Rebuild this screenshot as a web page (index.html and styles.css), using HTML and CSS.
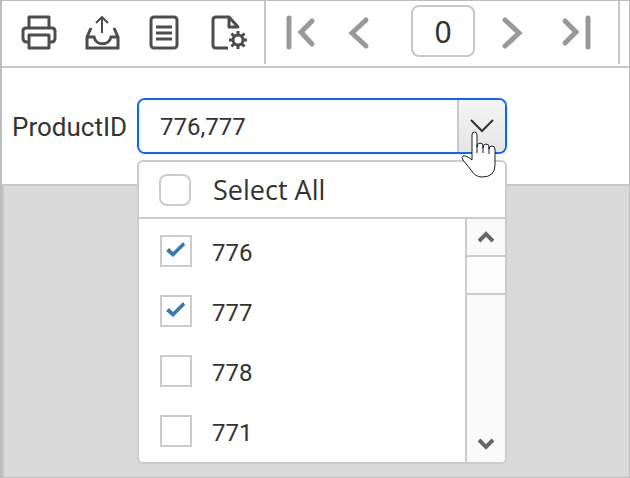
FILE: index.html
```html
<!DOCTYPE html>
<html lang="en">
  <head>
    <meta charset="utf-8" />
    <meta name="viewport" content="width=device-width, initial-scale=1" />
    <title>Report Viewer</title>
    <link rel="stylesheet" href="styles.css">
  </head>
  <body>
    <div class="viewer">
      <div class="toolbar">
        <div class="tools">
          <button type="button" class="tool" aria-label="Print">
            <svg width="36" height="36" viewBox="0 0 36 36">
              <path d="M8 12V2h20v10M8 27H6q-4 0-4-4v-7q0-3 3-3h26q3 0 3 3v7q0 4-4 4h-2M8 20h20v13H8z" />
            </svg>
          </button>
          <button type="button" class="tool" aria-label="Export">
            <svg width="36" height="36" viewBox="0 0 36 36">
              <path class="tray" d="M7 13l-4 9v11h31V22l-4-9M3 22h7c2 9 15 9 17 0h7" />
              <path class="thin" d="M18 18V2M12 8l6-6 6 6" />
            </svg>
          </button>
          <button type="button" class="tool" aria-label="Document map">
            <svg width="36" height="36" viewBox="0 0 36 36">
              <rect x="4" y="2" width="26" height="31" rx="3" />
              <path d="M9 12h16M9 18h16M9 24h16" />
            </svg>
          </button>
          <button type="button" class="tool tool-wide" aria-label="Page setup">
            <svg width="40" height="36" viewBox="0 0 40 36">
              <path d="M18 33H6q-3 0-3-3V5q0-3 3-3h13l9 10h-9V2" />
              <circle cx="28" cy="25" r="5" />
              <path d="M28 20v-4M28 30v4M23 25h-4M33 25h4M24.500 21.500l-3-3M31.500 21.500l3-3M24.500 28.500l-3 3M31.500 28.500l3 3" />
            </svg>
          </button>
        </div>
        <div class="pager">
          <button type="button" class="nav" aria-label="First page">
            <svg width="40" height="36" viewBox="0 0 40 36">
              <path class="bar" d="M8 3v29" />
              <path class="small" d="M31 6L20 17l11 12" />
            </svg>
          </button>
          <button type="button" class="nav" aria-label="Previous page">
            <svg width="40" height="36" viewBox="0 0 40 36">
              <path class="bar" d="M25 5L11 18l14 13" />
            </svg>
          </button>
          <input class="page" type="text" value="0" aria-label="Page" />
          <button type="button" class="nav" aria-label="Next page">
            <svg width="40" height="36" viewBox="0 0 40 36">
              <path class="bar" d="M10 5l14 13-14 13" />
            </svg>
          </button>
          <button type="button" class="nav" aria-label="Last page">
            <svg width="40" height="36" viewBox="0 0 40 36">
              <path class="small" d="M10 6l11 11-11 11" />
              <path class="bar" d="M33 3v29" />
            </svg>
          </button>
        </div>
      </div>

      <form class="params">
        <label for="product">ProductID</label>
        <div class="combo">
          <div class="combo-box">
            <input type="text" id="product" value="776,777" />
            <button type="button" aria-label="Show values">
              <svg width="24" height="14" viewBox="0 0 24 14">
                <path d="M1 1l11 11L23 1" />
              </svg>
            </button>
          </div>

          <!-- drop-down list, opens over the report area -->
          <div class="popup">
            <label class="select-all"><input type="checkbox" />Select All</label>
            <div class="popup-body">
              <div class="options">
                <label><input type="checkbox" checked /><span>776</span></label>
                <label><input type="checkbox" checked /><span>777</span></label>
                <label><input type="checkbox" /><span>778</span></label>
                <label><input type="checkbox" /><span>771</span></label>
              </div>
              <div class="scroll">
                <button type="button" aria-label="Scroll up">
                  <svg width="16" height="12" viewBox="0 0 16 12"><path d="M1 10l7-7 7 7" /></svg>
                </button>
                <div class="thumb"></div>
                <button type="button" class="down" aria-label="Scroll down">
                  <svg width="16" height="12" viewBox="0 0 16 12"><path d="M1 2l7 7 7-7" /></svg>
                </button>
              </div>
            </div>
          </div>

          <svg class="pointer" width="36" height="48" viewBox="0 0 36 48">
            <path d="M11 29V4Q11 1 13.500 1T16 4v12q0-4 3-4t3 3v2q0-4 3-4t3 3v2q0-3 3-3t3 3v16q0 12-13 12-7 0-11-7L2 29q-2-3 0-4 3-1 9 4z" />
            <path d="M16 14v8M22 15v7M28 16v7" />
          </svg>
        </div>
      </form>

      <div class="report"></div>
    </div>
  </body>
</html>
```

FILE: styles.css
```css
* {
  box-sizing: border-box;
}

body {
  margin: 0;
  color: #333;
  font-family: Roboto, "Liberation Sans", sans-serif;
}

button {
  display: flex;
  align-items: center;
  justify-content: center;
  padding: 0;
  border: 0;
  background: none;
  cursor: pointer;
}

svg {
  display: block;
  fill: none;
}

.viewer {
  display: flex;
  flex-direction: column;
  min-height: 100vh;
  border: 1px solid #bdbdbd;
  border-left-width: 2px;
}

/* toolbar */
.toolbar {
  display: flex;
  align-items: flex-start;
  border-bottom: 2px solid #c8c8c8;
  padding-bottom: 2px;
}

.tools,
.pager {
  display: flex;
  align-items: center;
  height: 63px;
  border-right: 2px solid #c8c8c8;
}

.tools {
  gap: 27px;
  padding: 0 14px 0 19px;
}

.pager {
  gap: 20px;
  padding: 0 23px 4px 15px;
}

.tool {
  width: 36px;
}

.tool-wide {
  width: 40px;
}

.tool svg {
  stroke: #4d4d4d;
  stroke-width: 3;
  stroke-linejoin: round;
}

.tool .tray,
.tool .thin {
  stroke-width: 2;
}

.tool .tray {
  stroke-width: 3;
  stroke-linejoin: miter;
}

.nav {
  width: 40px;
  padding-top: 4px;
}

.nav svg {
  stroke: #999;
  stroke-linecap: round;
}

.bar,
.small {
  stroke-width: 5;
}

.page {
  width: 64px;
  height: 52px;
  margin-left: 10px;
  padding: 2px 0 0;
  border: 2px solid #c8c8c8;
  border-radius: 8px;
  color: #333;
  font: 30px "Noto Sans", sans-serif;
  text-align: center;
}

/* parameters */
.params {
  display: flex;
  align-items: center;
  gap: 10px;
  padding: 30px 10px;
  border-bottom: 2px solid #c8c8c8;
  font-size: 26px;
}

.params > label {
  padding-top: 2px;
}

.combo {
  position: relative;
  width: 370px;
}

.combo-box {
  display: flex;
  height: 56px;
  border: 2px solid #0a66ff;
  border-radius: 8px;
  overflow: hidden;
}

.combo-box input {
  flex: 1;
  min-width: 0;
  padding: 2px 21px 0;
  border: 0;
  outline: 0;
  color: #333;
  font: 24px Roboto, sans-serif;
}

.combo-box button {
  width: 48px;
  border-left: 2px solid #c8c8c8;
  background: linear-gradient(#f5f5f5, #e5e5e5);
}

.combo-box path {
  stroke: #333;
  stroke-width: 2;
}

/* popup */
.popup {
  position: absolute;
  top: 62px;
  left: 0;
  width: 100%;
  border: 2px solid #ccc;
  border-radius: 6px;
  background: #fff;
  overflow: hidden;
}

.popup label {
  display: flex;
  align-items: center;
  gap: 20px;
  padding-left: 21px;
}

.popup input {
  appearance: none;
  width: 32px;
  height: 32px;
  margin: 0;
  border: 2px solid #ccc;
  background: #fff;
}

.popup input:checked::after {
  content: "";
  display: block;
  height: 100%;
  background: #337ab7;
  clip-path: polygon(4px 14px, 7px 11px, 11px 15px, 21px 5px, 23px 8px, 11px 20px);
}

.popup .select-all {
  height: 57px;
  gap: 22px;
  padding-left: 20px;
  border-bottom: 2px solid #ccc;
  font: 27px "Open Sans", "Noto Sans", sans-serif;
}

.popup .select-all input {
  border-radius: 8px;
}

.popup-body {
  display: flex;
}

.options {
  flex: 1;
  padding: 2px 0 1px;
  font-size: 24px;
}

.options label {
  height: 60px;
}

.options span {
  padding-top: 4px;
}

.scroll {
  display: flex;
  flex-direction: column;
  width: 40px;
  border-left: 2px solid #ccc;
  background: #fafafa;
}

.scroll button {
  height: 36px;
}

.scroll .down {
  margin-top: auto;
}

.scroll path {
  stroke: #666;
  stroke-width: 4;
}

.thumb {
  height: 40px;
  border: solid #ccc;
  border-width: 2px 0;
  background: #fcfcfc;
}

/* mouse pointer over the arrow */
.pointer {
  position: absolute;
  top: 33px;
  left: 324px;
  fill: #fff;
  stroke: #1c1c2b;
  stroke-width: 1;
  pointer-events: none;
}

.report {
  flex: 1;
  border-left: 2px solid #c8c8c8;
  background: #dadada;
}
```
